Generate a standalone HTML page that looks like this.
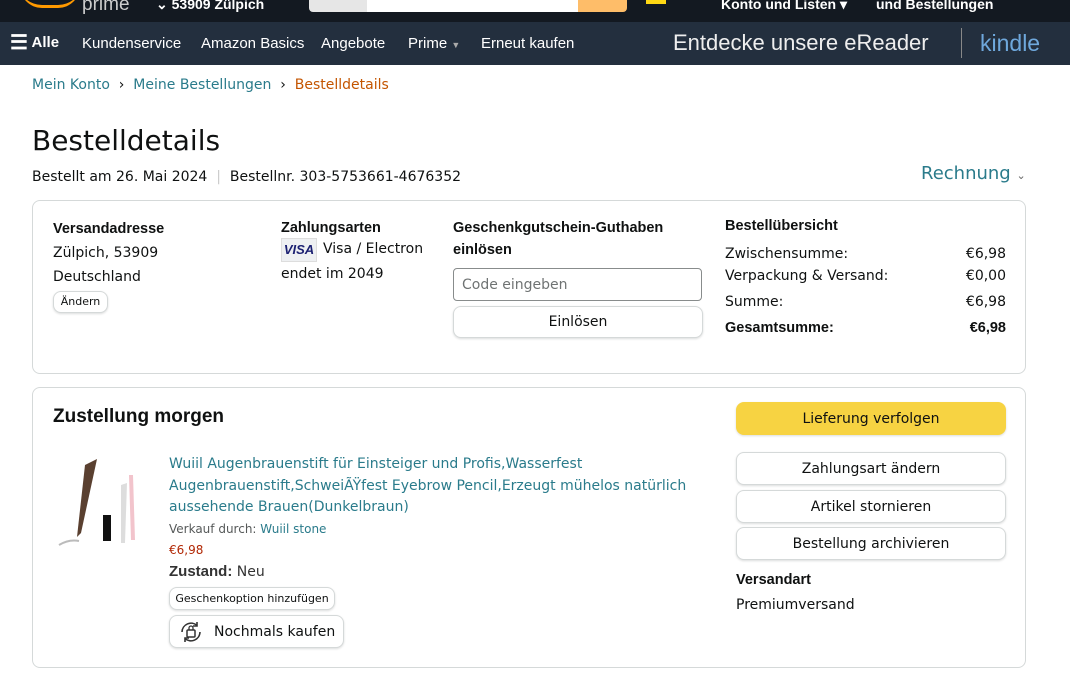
<!DOCTYPE html>
<html><head><meta charset="utf-8"><style>
*{box-sizing:border-box;margin:0;padding:0}
body{width:1070px;height:693px;overflow:hidden;background:#fff;font-family:"DejaVu Sans","Liberation Sans",sans-serif;color:#0f1111;font-size:14px;position:relative}
.top{position:absolute;left:0;top:0;width:1070px;height:22px;background:#131921;color:#fff;font-weight:bold;font-size:14px;font-family:"Liberation Sans",sans-serif}
.nav{position:absolute;left:0;top:22px;width:1070px;height:43px;background:#232f3e;color:#fff;font-size:15px;font-family:"Liberation Sans",sans-serif}
.nav span{position:absolute;top:13px}
.a{position:absolute}
.link{color:#2a7b8b}
.box{position:absolute;border:1px solid #d5d9d9;border-radius:8px}
.btn{position:absolute;border:1px solid #d5d9d9;border-radius:8px;background:#fff;text-align:center;font-size:14px;box-shadow:0 1px 2px rgba(15,17,17,.15)}
b{font-weight:bold;font-family:"Liberation Sans",sans-serif;font-size:14.5px}
</style></head><body>
<div class="top">
<span class="a" style="left:82px;top:-6px;color:#ccc;font-weight:normal;font-size:19px">prime</span>
<span class="a" style="left:20px;top:-14px;width:60px;height:22px;border-bottom:3px solid #f90;border-radius:0 0 30px 30px"></span>
<span class="a" style="left:156px;top:-4px">⌄ 53909 Zülpich</span>
<div class="a" style="left:309px;top:0;width:58px;height:12px;background:#e6e6e6;border-radius:0 0 0 4px"></div>
<div class="a" style="left:367px;top:0;width:211px;height:12px;background:#fff"></div>
<div class="a" style="left:578px;top:0;width:49px;height:12px;background:#febd69;border-radius:0 0 4px 0"></div>
<div class="a" style="left:646px;top:0;width:20px;height:4px;background:#ffd814"></div>
<span class="a" style="left:721px;top:-4px">Konto und Listen ▾</span>
<span class="a" style="left:876px;top:-4px">und Bestellungen</span>
</div>
<div class="nav">
<span style="left:10px;top:12px;font-weight:bold"><span style="position:static;font-size:20px;line-height:14px;vertical-align:-2px">☰</span> Alle</span>
<span style="left:82px">Kundenservice</span>
<span style="left:201px">Amazon Basics</span>
<span style="left:321px">Angebote</span>
<span style="left:408px">Prime <small style="color:#aaa;font-size:9px">▼</small></span>
<span style="left:481px">Erneut kaufen</span>
<span style="left:673px;top:8px;font-size:22px;color:#eee">Entdecke unsere eReader</span>
<div class="a" style="left:961px;top:6px;width:1px;height:30px;background:#888"></div>
<span style="left:980px;top:8px;font-size:23px;color:#6fa8dc">kindle</span>
</div>

<div class="a" style="left:32px;top:77px;font-size:14px"><span class="link">Mein Konto</span>&nbsp; › &nbsp;<span class="link">Meine Bestellungen</span>&nbsp; › &nbsp;<span style="color:#c45500">Bestelldetails</span></div>
<div class="a" style="left:32px;top:124px;font-size:28px">Bestelldetails</div>
<div class="a" style="left:32px;top:169px">Bestellt am 26. Mai 2024 &nbsp;<span style="color:#ccc">|</span>&nbsp; Bestellnr. 303-5753661-4676352</div>
<div class="a link" style="left:921px;top:163px;font-size:18px">Rechnung <small style="font-size:11px;color:#666">⌄</small></div>

<div class="box" style="left:32px;top:200px;width:994px;height:174px"></div>
<div class="a" style="left:53px;top:217px;line-height:24px"><b>Versandadresse</b><br>Zülpich, 53909<br>Deutschland</div>
<div class="btn" style="left:53px;top:291px;width:55px;height:22px;font-size:11px;line-height:20px">Ändern</div>
<div class="a" style="left:281px;top:217px;line-height:22px"><b>Zahlungsarten</b></div>
<div class="a" style="left:281px;top:238px;width:36px;height:24px;border:1px solid #ddd;background:#eef0f2;color:#1a1f71;font-weight:bold;font-style:italic;font-size:13px;text-align:center;line-height:22px;font-family:'Liberation Sans',sans-serif">VISA</div>
<div class="a" style="left:323px;top:241px">Visa / Electron</div>
<div class="a" style="left:281px;top:266px">endet im 2049</div>
<div class="a" style="left:453px;top:217px;line-height:22px"><b>Geschenkgutschein-Guthaben<br>einlösen</b></div>
<div class="a" style="left:453px;top:268px;width:249px;height:33px;border:1px solid #888c8c;border-radius:4px;color:#6f7373;padding:8px 8px">Code eingeben</div>
<div class="btn" style="left:453px;top:306px;width:250px;height:32px;line-height:31px">Einlösen</div>
<div class="a" style="left:725px;top:218px"><b>Bestellübersicht</b></div>
<div class="a" style="left:725px;top:243px;width:281px;line-height:22px">
<div style="display:flex;justify-content:space-between"><span>Zwischensumme:</span><span>€6,98</span></div>
<div style="display:flex;justify-content:space-between"><span>Verpackung &amp; Versand:</span><span>€0,00</span></div>
<div style="display:flex;justify-content:space-between;margin-top:4px"><span>Summe:</span><span>€6,98</span></div>
<div style="display:flex;justify-content:space-between;margin-top:4px"><b>Gesamtsumme:</b><b>€6,98</b></div>
</div>

<div class="box" style="left:32px;top:387px;width:994px;height:281px"></div>
<div class="a" style="left:53px;top:406px;font-size:19px;font-weight:bold;font-family:'Liberation Sans',sans-serif">Zustellung morgen</div>
<svg class="a" style="left:55px;top:455px" width="90" height="95" viewBox="0 0 90 95">
<path d="M30 10 L42 4 L26 78 L22 82 Z" fill="#5a4030"/>
<rect x="48" y="60" width="8" height="26" fill="#111"/>
<path d="M66 30 L72 28 L70 88 L66 88 Z" fill="#ddd"/>
<path d="M74 20 L78 20 L80 85 L76 85 Z" fill="#f2c4cc"/>
<path d="M4 90 Q14 84 24 86" stroke="#bbb" stroke-width="2" fill="none"/>
</svg>
<div class="a link" style="left:169px;top:454px;width:540px;font-size:14px;line-height:21.5px">Wuiil Augenbrauenstift für Einsteiger und Profis,Wasserfest Augenbrauenstift,SchweiÃŸfest Eyebrow Pencil,Erzeugt mühelos natürlich aussehende Brauen(Dunkelbraun)</div>
<div class="a" style="left:169px;top:522px;font-size:12px;color:#565959">Verkauf durch: <span class="link">Wuiil stone</span></div>
<div class="a" style="left:169px;top:543px;font-size:12px;color:#b12704">€6,98</div>
<div class="a" style="left:169px;top:563px;font-size:14px;color:#333"><b style="font-size:15px">Zustand:</b> Neu</div>
<div class="btn" style="left:169px;top:587px;width:166px;height:23px;font-size:11px;line-height:22px">Geschenkoption hinzufügen</div>
<div class="btn" style="left:169px;top:615px;width:175px;height:33px;font-size:14px;line-height:32px;text-align:left;padding-left:44px">Nochmals kaufen</div>
<svg class="a" style="left:178px;top:619px" width="26" height="26" viewBox="0 0 26 26"><path d="M4 13a9 9 0 0 1 15-6.5M22 13a9 9 0 0 1-15 6.5" stroke="#333" stroke-width="1.6" fill="none"/><path d="M19 3v4h-4M7 23v-4h4" stroke="#333" stroke-width="1.6" fill="none"/><rect x="9" y="11" width="8" height="7" rx="1" stroke="#333" stroke-width="1.5" fill="none"/><path d="M11 11V9a2 2 0 0 1 4 0v2" stroke="#333" stroke-width="1.3" fill="none"/></svg>

<div class="btn" style="left:736px;top:402px;width:270px;height:33px;line-height:32px;background:#f7d342;border-color:#f7d342">Lieferung verfolgen</div>
<div class="btn" style="left:736px;top:452px;width:270px;height:33px;line-height:32px">Zahlungsart ändern</div>
<div class="btn" style="left:736px;top:490px;width:270px;height:33px;line-height:32px">Artikel stornieren</div>
<div class="btn" style="left:736px;top:527px;width:270px;height:33px;line-height:32px">Bestellung archivieren</div>
<div class="a" style="left:736px;top:572px"><b>Versandart</b></div>
<div class="a" style="left:736px;top:597px">Premiumversand</div>
</body></html>
